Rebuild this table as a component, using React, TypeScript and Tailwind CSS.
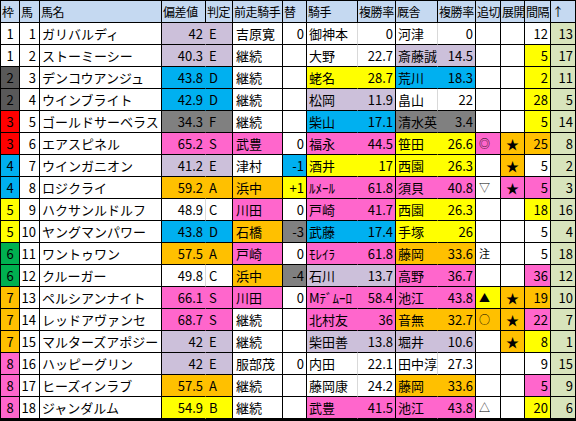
import React from "react";

type Bg = "w" | "L" | "B" | "G" | "P" | "O" | "Y";

type Row = [
  number, number, string,
  string, string, Bg,
  string, Bg, string, Bg,
  string, string, Bg,
  string, string, Bg,
  string, Bg, string, Bg,
  string, Bg, string,
];

const bg: Record<Bg, string> = {
  w: "bg-white",
  L: "bg-[#ccc0da]",
  B: "bg-[#00b0f0]",
  G: "bg-[#808080]",
  P: "bg-[#ff66cc]",
  O: "bg-[#ffc000]",
  Y: "bg-[#ffff00]",
};

// inner line of a pair: light grid line on white, invisible on colour
const pairLine: Record<Bg, string> = {
  w: "border-r-[#d9d9d9]",
  L: "border-r-[#ccc0da]",
  B: "border-r-[#00b0f0]",
  G: "border-r-[#808080]",
  P: "border-r-[#ff66cc]",
  O: "border-r-[#ffc000]",
  Y: "border-r-[#ffff00]",
};

const waku: Record<number, string> = {
  1: "bg-white",
  2: "bg-[#595959]",
  3: "bg-[#ff0000]",
  4: "bg-[#00b0f0]",
  5: "bg-[#ffff00]",
  6: "bg-[#00b050]",
  7: "bg-[#ffc000]",
  8: "bg-[#ff66cc]",
};

const rows: Row[] = [
  [1, 1, "ガリバルディ", "42", "E", "L", "吉原寛", "w", "0", "w", "御神本", "0", "w", "河津", "0", "w", "", "w", "", "w", "12", "w", "13"],
  [1, 2, "ストーミーシー", "40.3", "E", "L", "継続", "w", "", "w", "大野", "22.7", "w", "斎藤誠", "14.5", "L", "", "w", "", "w", "5", "Y", "17"],
  [2, 3, "デンコウアンジュ", "43.8", "D", "B", "継続", "w", "", "w", "蛯名", "28.7", "Y", "荒川", "18.3", "B", "", "w", "", "w", "2", "Y", "11"],
  [2, 4, "ウインブライト", "42.9", "D", "B", "継続", "w", "", "w", "松岡", "11.9", "L", "畠山", "22", "w", "", "w", "", "w", "28", "Y", "5"],
  [3, 5, "ゴールドサーベラス", "34.3", "F", "G", "継続", "w", "", "w", "柴山", "17.1", "B", "清水英", "3.4", "G", "", "w", "", "w", "5", "Y", "14"],
  [3, 6, "エアスピネル", "65.2", "S", "P", "武豊", "P", "0", "w", "福永", "44.5", "P", "笹田", "26.6", "Y", "◎", "P", "★", "O", "25", "O", "8"],
  [4, 7, "ウインガニオン", "41.2", "E", "L", "津村", "w", "-1", "B", "酒井", "17", "Y", "西園", "26.3", "Y", "", "w", "★", "O", "5", "w", "2"],
  [4, 8, "ロジクライ", "59.2", "A", "O", "浜中", "O", "+1", "Y", "ﾙﾒｰﾙ", "61.8", "P", "須貝", "40.8", "P", "▽", "w", "★", "P", "5", "P", "3"],
  [5, 9, "ハクサンルドルフ", "48.9", "C", "w", "川田", "P", "0", "w", "戸崎", "41.7", "P", "西園", "26.3", "Y", "", "w", "", "w", "18", "Y", "16"],
  [5, 10, "ヤングマンパワー", "43.8", "D", "B", "石橋", "O", "-3", "G", "武藤", "17.4", "B", "手塚", "26", "Y", "", "w", "", "w", "5", "w", "4"],
  [6, 11, "ワントゥワン", "57.5", "A", "O", "戸崎", "P", "0", "w", "ﾓﾚｲﾗ", "61.8", "P", "藤岡", "33.6", "O", "注", "w", "", "w", "5", "w", "18"],
  [6, 12, "クルーガー", "49.8", "C", "w", "浜中", "O", "-4", "G", "石川", "13.7", "L", "高野", "36.7", "P", "", "w", "", "w", "36", "P", "12"],
  [7, 13, "ペルシアンナイト", "66.1", "S", "P", "川田", "P", "0", "w", "Mﾃﾞﾑｰﾛ", "58.4", "P", "池江", "43.8", "P", "▲", "Y", "★", "O", "19", "O", "10"],
  [7, 14, "レッドアヴァンセ", "68.7", "S", "P", "継続", "w", "", "w", "北村友", "36", "P", "音無", "32.7", "O", "○", "O", "★", "O", "22", "P", "7"],
  [7, 15, "マルターズアポジー", "42", "E", "L", "継続", "w", "", "w", "柴田善", "13.8", "L", "堀井", "10.6", "L", "", "w", "★", "O", "8", "Y", "1"],
  [8, 16, "ハッピーグリン", "42", "E", "L", "服部茂", "w", "0", "w", "内田", "22.1", "w", "田中淳", "27.3", "w", "", "w", "", "w", "9", "w", "15"],
  [8, 17, "ヒーズインラブ", "57.5", "A", "O", "継続", "w", "", "w", "藤岡康", "24.2", "w", "藤岡", "33.6", "O", "", "w", "", "w", "5", "P", "9"],
  [8, 18, "ジャンダルム", "54.9", "B", "Y", "継続", "w", "", "w", "武豊", "41.5", "P", "池江", "43.8", "P", "△", "w", "", "w", "20", "Y", "6"],
];

const headers = ["枠", "馬", "馬名", "偏差値", "判定", "前走騎手", "替", "騎手", "複勝率", "厩舎", "複勝率", "追切", "展開", "間隔", "↑"];

const cols =
  "grid grid-cols-[20px_20px_122px_44px_27px_50px_24px_51px_38px_42px_38px_25px_24px_26px_25px]";

function Cell({
  children,
  className = "",
  line = "border-r-black",
}: {
  children?: React.ReactNode;
  className?: string;
  line?: string;
}) {
  return (
    <div
      className={`h-[22px] border-b border-r border-b-black ${line} overflow-hidden whitespace-nowrap leading-[21px] ${className}`}
    >
      {children}
    </div>
  );
}

export default function App() {
  return (
    <div className="w-[576px] bg-white font-['Noto_Sans_CJK_JP',sans-serif] text-[13px] text-black">
      <div className="border-b-2 border-black">
        <div className={cols}>
          {headers.map((h, i) => (
            <div
              key={i}
              className={`h-[23px] border-t border-b border-r border-black bg-[#c5d9f1] pl-[1px] leading-[21px] text-[12px] tracking-[-0.4px] overflow-hidden whitespace-nowrap ${
                i === 0 ? "border-l" : ""
              }`}
            >
              {h}
            </div>
          ))}
        </div>
        {rows.map((r) => {
          const [w, no, name, hensa, hantei, hBg, zen, zBg, kae, kBg, kishu, kRate, kiBg, kyu, kyRate, kyBg, oi, oiBg, ten, tenBg, kan, kanBg, up] = r;
          return (
            <div key={no} className={cols}>
              <Cell className={`border-l border-l-black text-center ${waku[w]}`}>{w}</Cell>
              <Cell className="bg-white pr-[3px] text-right">{no}</Cell>
              <Cell className="bg-white pl-[2px]">{name}</Cell>
              <Cell className={`${bg[hBg]} pr-[2px] text-right`} line={pairLine[hBg]}>
                {hensa}
              </Cell>
              <Cell className={`${bg[hBg]} pl-[3px]`}>{hantei}</Cell>
              <Cell className={`${bg[zBg]} pl-[3px]`}>{zen}</Cell>
              <Cell className={`${bg[kBg]} pr-[2px] text-right`}>{kae}</Cell>
              <Cell className={`${bg[kiBg]} pl-[2px]`} line={pairLine[kiBg]}>
                {kishu}
              </Cell>
              <Cell className={`${bg[kiBg]} pr-[2px] text-right`}>{kRate}</Cell>
              <Cell className={`${bg[kyBg]} pl-[2px]`} line={pairLine[kyBg]}>
                {kyu}
              </Cell>
              <Cell className={`${bg[kyBg]} pr-[2px] text-right`}>{kyRate}</Cell>
              <Cell className={`${bg[oiBg]} pl-[3px] text-[11px]`}>{oi}</Cell>
              <Cell className={`${bg[tenBg]} text-center`}>{ten}</Cell>
              <Cell className={`${bg[kanBg]} pr-[2px] text-right`}>{kan}</Cell>
              <Cell className="bg-[#d8e4bc] pr-[2px] text-right">{up}</Cell>
            </div>
          );
        })}
      </div>
    </div>
  );
}
